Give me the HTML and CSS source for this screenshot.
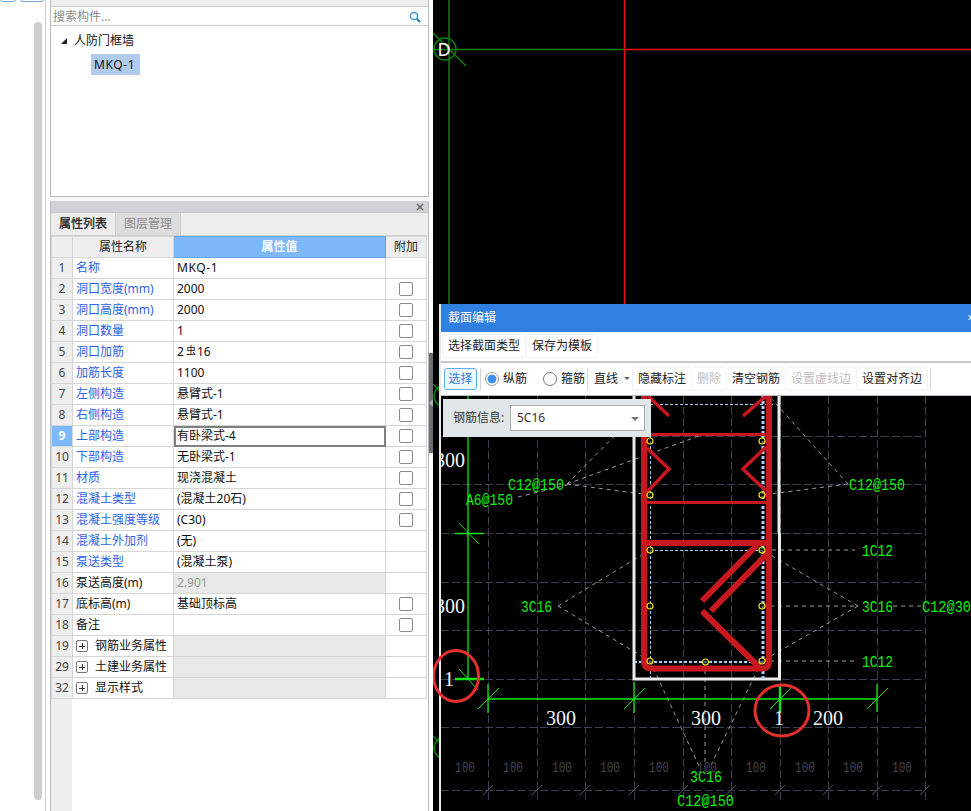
FILE: index.html
```html
<!DOCTYPE html>
<html lang="zh">
<head>
<meta charset="utf-8">
<title>截面编辑</title>
<link rel="stylesheet" href="styles.css">
</head>
<body>
<div class="app">
  <aside class="rail">
    <div class="rail-btns"><span class="rail-btn small"></span><span class="rail-btn wide"></span></div>
    <div class="rail-scroll"></div>
  </aside>
  <div class="side">
    <section class="tree-panel">
      <div class="tree-top"></div>
      <div class="search">
        <span class="search-text">搜索构件...</span>
        <svg class="search-icon" width="12" height="12" viewBox="0 0 12 12"><circle cx="5" cy="5" r="3.6" fill="none" stroke="#3d9bd8" stroke-width="1.5"/><path d="M7.8 7.8 11 11" stroke="#2f7fb8" stroke-width="2"/></svg>
      </div>
      <div class="tree">
        <div class="tree-root"><span class="tree-arrow"></span>人防门框墙</div>
        <div class="tree-leaf"><span class="tree-sel">MKQ-1</span></div>
      </div>
    </section>
    <div class="side-gap"></div>
    <section class="prop-panel">
      <div class="prop-head"><svg width="8" height="8" viewBox="0 0 8 8"><path d="M1 1 7 7M7 1 1 7" stroke="#666" stroke-width="1.5"/></svg></div>
      <div class="tabs"><span class="tab active">属性列表</span><span class="tab">图层管理</span></div>
      <div class="prop-body">
        <table class="props">
          <colgroup><col class="c-no"><col class="c-name"><col class="c-val"><col class="c-add"></colgroup>
          <thead><tr><th class="no"></th><th>属性名称</th><th class="hl">属性值</th><th>附加</th></tr></thead>
          <tbody>
            <tr><td class="no">1</td><td class="name link">名称</td><td class="val"><span class="code">MKQ-1</span></td><td></td></tr>
            <tr><td class="no">2</td><td class="name link">洞口宽度(mm)</td><td class="val">2000</td><td><span class="check"></span></td></tr>
            <tr><td class="no">3</td><td class="name link">洞口高度(mm)</td><td class="val">2000</td><td><span class="check"></span></td></tr>
            <tr><td class="no">4</td><td class="name link">洞口数量</td><td class="val">1</td><td><span class="check"></span></td></tr>
            <tr><td class="no">5</td><td class="name link">洞口加筋</td><td class="val">2<span class="rebar">虫</span>16</td><td><span class="check"></span></td></tr>
            <tr><td class="no">6</td><td class="name link">加筋长度</td><td class="val">1100</td><td><span class="check"></span></td></tr>
            <tr><td class="no">7</td><td class="name link">左侧构造</td><td class="val">悬臂式-1</td><td><span class="check"></span></td></tr>
            <tr><td class="no">8</td><td class="name link">右侧构造</td><td class="val">悬臂式-1</td><td><span class="check"></span></td></tr>
            <tr><td class="no cur">9</td><td class="name link">上部构造</td><td class="val edit">有卧梁式-4</td><td><span class="check"></span></td></tr>
            <tr><td class="no">10</td><td class="name link">下部构造</td><td class="val">无卧梁式-1</td><td><span class="check"></span></td></tr>
            <tr><td class="no">11</td><td class="name link">材质</td><td class="val">现浇混凝土</td><td><span class="check"></span></td></tr>
            <tr><td class="no">12</td><td class="name link">混凝土类型</td><td class="val">(混凝土20石)</td><td><span class="check"></span></td></tr>
            <tr><td class="no">13</td><td class="name link">混凝土强度等级</td><td class="val">(C30)</td><td><span class="check"></span></td></tr>
            <tr><td class="no">14</td><td class="name link">混凝土外加剂</td><td class="val">(无)</td><td></td></tr>
            <tr><td class="no">15</td><td class="name link">泵送类型</td><td class="val">(混凝土泵)</td><td></td></tr>
            <tr><td class="no">16</td><td class="name">泵送高度(m)</td><td class="val off">2.901</td><td></td></tr>
            <tr><td class="no">17</td><td class="name">底标高(m)</td><td class="val">基础顶标高</td><td><span class="check"></span></td></tr>
            <tr><td class="no">18</td><td class="name">备注</td><td class="val"></td><td><span class="check"></span></td></tr>
            <tr><td class="no">19</td><td class="name"><span class="plus"></span>钢筋业务属性</td><td class="val off"></td><td></td></tr>
            <tr><td class="no">29</td><td class="name"><span class="plus"></span>土建业务属性</td><td class="val off"></td><td></td></tr>
            <tr><td class="no">32</td><td class="name"><span class="plus"></span>显示样式</td><td class="val off"></td><td></td></tr>
          </tbody>
        </table>
      </div>
    </section>
  </div>
  <div class="splitter"><span class="handle"><i></i></span></div>
  <main class="canvas">
    <svg class="cad-back" width="538" height="811" viewBox="433 0 538 811">
      <g fill="none" stroke="#0b7f0b" stroke-width="1.5">
        <path d="M449 0V304M433 49.500H624"/>
        <circle cx="445" cy="49" r="11"/>
        <path d="M433 33 466 66"/>
        <circle cx="445" cy="396" r="11"/>
        <path d="M433 384 466 417"/>
        <circle cx="445" cy="748" r="11"/>
        <path d="M433 736 466 769"/>
      </g>
      <path d="M624.500 0V304M624 49.500H971" stroke="#f01010" stroke-width="1.500" fill="none"/>
      <text class="axis" x="444" y="56" text-anchor="middle">D</text>
    </svg>

    <div class="dialog">
      <div class="dlg-title"><span>截面编辑</span><span class="dlg-close">×</span></div>
      <div class="bar bar1">
        <span class="tbtn">选择截面类型</span><span class="tbtn">保存为模板</span>
      </div>
      <div class="bar bar2">
        <span class="tbtn on">选择</span>
        <i class="sep s1"></i>
        <span class="radio sel"></span><span class="rlabel">纵筋</span>
        <span class="radio r2"></span><span class="rlabel">箍筋</span>
        <i class="sep s2"></i>
        <span class="combo">直线</span><i class="tri"></i>
        <span class="tbtn first">隐藏标注</span><span class="tbtn dis">删除</span><span class="tbtn">清空钢筋</span><span class="tbtn dis">设置虚线边</span><span class="tbtn">设置对齐边</span>
        <i class="sep s3"></i>
      </div>
      <div class="stage">
        <svg class="cad" width="530" height="415" viewBox="441 396 530 415">
          <path class="grid" d="M488 396V800M537 396V800M585 396V800M634 396V800M683 396V800M731 396V800M780 396V800M828 396V800M877 396V800M925 396V800M441 436.500H925M441 484.500H925M441 533.500H925M441 582.500H925M441 630.500H925M441 679.500H925M441 727.500H925M441 790.500H925"/>
          <path class="tick" d="M483 795 493 785M532 795 542 785M580 795 590 785M629 795 639 785M678 795 688 785M726 795 736 785M775 795 785 785M823 795 833 785M872 795 882 785M920 795 930 785"/>

          <path class="leader" d="M518 497 567 485M567 484 650 400M567 484 707 433M567 484 650 495M848 484 769 396M848 484 762 495M558 606 650 550M558 606 650 661M858 606 762 550M858 606 762 661M762 606 858 606M893 606 922 606M772 550 855 550M762 661 855 661M650 661 700 768M762 661 710 767M705 662V767"/>

          <path class="white" d="M634 396V679H779.500V533M779 533V396"/>

          <path class="bar-blue b1" d="M650.500 396V680"/>
          <path class="bar-blue b2" d="M763 396V680"/>
          <path class="bar-blue b3" d="M650 404.500H775M650 550.500H763"/>
          <path class="bar-blue b4" d="M634 662H763"/>

          <g fill="none" stroke="#c8181f">
            <path stroke-width="6" d="M644 396V661Q644 668.500 651 668.500H762Q769 668.500 769 661V396"/>
            <path stroke-width="3" d="M647 434.500H766M647 502.500H766"/>
            <path stroke-width="6" d="M647 543H766"/>
            <path stroke-width="3.500" d="M648 396 669 416M766 396 743 416M647 448 669 469 647 492M766 447 743 469 766 491"/>
            <path stroke-width="6" d="M757 545 702 601M768 553 711 611M702 611 759 667"/>
          </g>

          <g class="nodes">
            <circle cx="650" cy="441" r="3"/><circle cx="762" cy="441" r="3"/>
            <circle cx="650" cy="495" r="3"/><circle cx="762" cy="495" r="3"/>
            <circle cx="650" cy="550" r="3"/><circle cx="762" cy="550" r="3"/>
            <circle cx="650" cy="606" r="3"/><circle cx="762" cy="606" r="3"/>
            <circle cx="650" cy="661" r="3"/><circle cx="705.500" cy="662" r="3"/><circle cx="762" cy="661" r="3"/>
          </g>

          <g class="dim-line">
            <path d="M468 396V679M455 533.500H484M488 699H877M488 684V713M634 682V713M877 684V712"/>
            <path class="thin" d="M459 523 479 544M478 709 499 688M624 709 645 688M770 709 791 688M867 709 888 688M459 669 478 690"/>
            <path class="thick" d="M455 679H484M780 686V713"/>
          </g>

          <g class="gtext">
            <text x="508" y="490" textLength="56" lengthAdjust="spacingAndGlyphs">C12@150</text>
            <text x="466" y="505" textLength="47" lengthAdjust="spacingAndGlyphs">A6@150</text>
            <text x="849" y="490" textLength="56" lengthAdjust="spacingAndGlyphs">C12@150</text>
            <text x="521" y="612" textLength="31" lengthAdjust="spacingAndGlyphs">3C16</text>
            <text x="862" y="612" textLength="31" lengthAdjust="spacingAndGlyphs">3C16</text>
            <text x="922" y="612" textLength="49" lengthAdjust="spacingAndGlyphs">C12@30</text>
            <text x="862" y="556" textLength="31" lengthAdjust="spacingAndGlyphs">1C12</text>
            <text x="862" y="667" textLength="31" lengthAdjust="spacingAndGlyphs">1C12</text>
            <text x="690" y="782" textLength="32" lengthAdjust="spacingAndGlyphs">3C16</text>
            <text x="677" y="806" textLength="57" lengthAdjust="spacingAndGlyphs">C12@150</text>
          </g>

          <g class="dtext">
            <text x="435" y="467">300</text>
            <text x="435" y="613">300</text>
            <text x="546" y="725">300</text>
            <text x="691" y="725">300</text>
            <text x="813" y="725">200</text>
            <text x="444" y="686">1</text>
            <text x="774" y="725">1</text>
          </g>

          <g class="ltext">
            <text x="455" y="772" textLength="20" lengthAdjust="spacingAndGlyphs">100</text>
            <text x="503" y="772" textLength="20" lengthAdjust="spacingAndGlyphs">100</text>
            <text x="552" y="772" textLength="20" lengthAdjust="spacingAndGlyphs">100</text>
            <text x="600" y="772" textLength="20" lengthAdjust="spacingAndGlyphs">100</text>
            <text x="649" y="772" textLength="20" lengthAdjust="spacingAndGlyphs">100</text>
            <text x="697" y="772" textLength="20" lengthAdjust="spacingAndGlyphs">100</text>
            <text x="746" y="772" textLength="20" lengthAdjust="spacingAndGlyphs">100</text>
            <text x="795" y="772" textLength="20" lengthAdjust="spacingAndGlyphs">100</text>
            <text x="843" y="772" textLength="20" lengthAdjust="spacingAndGlyphs">100</text>
            <text x="892" y="772" textLength="20" lengthAdjust="spacingAndGlyphs">100</text>
          </g>
        </svg>
        <div class="rebar-info">
          <span class="info-label">钢筋信息:</span>
          <span class="info-select">5C16<i class="tri dark"></i></span>
        </div>
      </div>
    </div>

    <svg class="marks" width="538" height="811" viewBox="433 0 538 811">
      <ellipse cx="456" cy="676" rx="22.500" ry="25.500"/>
      <ellipse cx="782" cy="710.500" rx="27" ry="25.500"/>
    </svg>
  </main>
</div>
</body>
</html>
```

FILE: styles.css
```css
* { box-sizing: border-box; }
html, body { margin: 0; padding: 0; height: 811px; overflow: hidden; background: #fff; }
body { font: 12px/1 "Noto Sans", "Noto Sans CJK SC", sans-serif; color: #111; }
i { display: block; font-style: normal; }

.app { display: flex; width: 971px; height: 811px; overflow: hidden; }

/* left rail */
.rail { width: 46px; flex: none; border-right: 1px solid #cfcfcf; background: #fff; }
.rail-btns { display: flex; gap: 4px; height: 3px; overflow: hidden; }
.rail-btn { display: block; height: 10px; margin-top: -8px; border: 1px solid #6aa9e6; border-radius: 3px; }
.rail-btn.small { width: 16px; }
.rail-btn.wide { width: 24px; }
.rail-scroll { width: 8px; height: 778px; margin: 19px 0 0 34px; background: #cdcdcd; border-radius: 4px; }

/* side column */
.side { width: 379px; margin-left: 4px; flex: none; display: flex; flex-direction: column; }
.tree-panel { height: 197px; border: 1px solid #b9b9be; border-top: 0; display: flex; flex-direction: column; }
.tree-top { height: 7px; flex: none; background: #eeeeee; border-bottom: 1px solid #c9c9d0; }
.search { height: 19px; flex: none; display: flex; align-items: center; justify-content: space-between; padding: 2px 7px 0 2px; border-bottom: 1px solid #c9c9d0; }
.search-text { color: #8a8a8a; }
.search-icon { display: block; }
.tree { flex: 1; padding-top: 8px; }
.tree-root { display: flex; align-items: center; height: 14px; padding-left: 10px; }
.tree-arrow { width: 0; height: 0; margin-right: 7px; border-left: 6px solid transparent; border-bottom: 6px solid #222; }
.tree-leaf { margin-top: 6px; padding-left: 40px; }
.tree-sel { display: inline-block; height: 21px; line-height: 21px; padding: 0 5px 0 3px; background: #b1cbec; letter-spacing: .6px; }
.side-gap { height: 4px; flex: none; background: #f7f7f7; }
.prop-panel { flex: 1; border: 1px solid #b9b9be; border-top: 0; border-bottom: 0; display: flex; flex-direction: column; min-height: 0; }
.prop-head { height: 12px; flex: none; background: #d2d3d7; display: flex; align-items: center; justify-content: flex-end; padding-right: 4px; border-bottom: 1px solid #c5c6cb; }
.prop-head svg { display: block; }
.tabs { height: 23px; flex: none; display: flex; background: #eeeeee; border-bottom: 1px solid #cfcfd4; }
.tab { width: 65px; line-height: 22px; text-align: center; background: #dddddd; color: #8a8a8a; border-right: 1px solid #c9c9ce; }
.tab.active { background: #eeeeee; color: #222; -webkit-text-stroke: .3px #222; }
.prop-body { flex: 1; background: linear-gradient(to right, #eeeeee 21px, #fff 21px); }
.props { border-collapse: collapse; table-layout: fixed; width: 375px; }
.c-no { width: 21px; }
.c-name { width: 101px; }
.c-val { width: 212px; }
.c-add { width: 41px; }
.props th, .props td { height: 21px; padding: 0; border: 1px solid #d6d6d6; font-weight: normal; white-space: nowrap; vertical-align: middle; }
.props thead th { background: #eeeeee; text-align: center; color: #222; }
.props thead th.hl { background: #7db8f8; color: #fff; border: 1px solid #64a6ee; -webkit-text-stroke: .3px #fff; }
.props td.no { background: #eeeeee; text-align: center; color: #444; }
.props td.no.cur { background: #7db8f8; color: #fff; font-weight: bold; }
.props td.name { padding-left: 3px; color: #111; }
.props td.name.link { color: #2e62e6; }
.props td.val { padding-left: 3px; color: #111; }
.props td.val.off { background: #e8e8e8; color: #999; }
.props td.val.edit { outline: 2px solid #808080; outline-offset: -2px; }
.props td:last-child { text-align: center; }
.code { letter-spacing: .6px; }
.check { display: block; width: 14px; height: 14px; margin: 0 auto; border: 1px solid #8c8c8c; border-radius: 2px; background: #fff; }
.rebar { font-size: 10px; margin: 0 1px 0 2px; position: relative; top: -2px; }
.plus { display: inline-block; width: 12px; height: 12px; margin-right: 7px; vertical-align: -2px; border: 1px solid #777; border-radius: 2px; background: linear-gradient(#333,#333) center/6px 1px no-repeat, linear-gradient(#333,#333) center/1px 6px no-repeat, #fff; }

/* splitter */
.splitter { width: 4px; flex: none; padding-top: 353px; background: #fff; }
.handle { display: flex; align-items: center; height: 100px; background: #6c7076; }
.handle i { width: 0; height: 0; border-top: 4px solid transparent; border-bottom: 4px solid transparent; border-right: 4px solid #aab0b6; }

/* canvas */
.canvas { flex: 1; position: relative; background: #000; overflow: hidden; }
.cad-back { position: absolute; left: 0; top: 0; display: block; }
.axis { font: 18px "Noto Sans", sans-serif; fill: #fff; }
.marks { position: absolute; left: 0; top: 0; display: block; pointer-events: none; }
.marks ellipse { fill: none; stroke: #e5302e; stroke-width: 3; }

/* dialog (a window on the canvas) */
.dialog { position: absolute; left: 6px; top: 304px; width: 532px; height: 507px; border-left: 2px solid #e8e8e8; display: flex; flex-direction: column; overflow: hidden; background: #000; }
.dlg-title { height: 28px; flex: none; margin-left: -2px; background: #2f80e0; color: #fff; display: flex; align-items: center; justify-content: space-between; padding: 0 0 0 9px; }
.dlg-close { font-size: 12px; margin-right: -3px; }
.bar { flex: none; display: flex; align-items: center; background: #fff; }
.bar1 { height: 31px; padding: 0 0 2px 2px; border-bottom: 2px solid #c6cacf; gap: 2px; }
.bar2 { height: 33px; padding: 0 0 1px 3px; border-bottom: 1px solid #b9bcc0; }
.tbtn { display: block; line-height: 22px; height: 22px; padding: 0 5px; background: #fff; border-radius: 3px; box-shadow: 0 0 0 1px #f4f4f4; color: #222; }
.bar2 .tbtn { margin-right: 1px; }
.tbtn.on { width: 33px; padding: 0; text-align: center; margin-right: 0; color: #2f80e0; background: #eef6ff; border: 1px solid #5fabf2; line-height: 20px; box-shadow: none; }
.tbtn.dis { color: #bdbdbd; }
.tbtn.first { margin-left: 3px; }
.sep { width: 1px; height: 22px; background: #d6d6d6; }
.s1 { margin: 0 4px 0 3px; }
.s2 { margin: 0 6px 0 2px; }
.s3 { margin-left: 2px; }
.radio { display: block; width: 14px; height: 14px; border: 1px solid #777; border-radius: 50%; background: #fff; }
.radio.sel { border-color: #9a9a9a; background: radial-gradient(circle, #3d8ff0 0, #3d8ff0 4px, #fff 4.800px); }
.radio.r2 { margin-left: 16px; }
.rlabel { margin-left: 4px; }
.combo { color: #222; }
.tri { width: 0; height: 0; margin-left: 6px; border-left: 3px solid transparent; border-right: 3px solid transparent; border-top: 3px solid #666; }

.stage { flex: 1; position: relative; min-height: 0; }
.cad { display: block; }
.grid { fill: none; stroke: #3a4252; stroke-width: 1; stroke-dasharray: 8 3; shape-rendering: crispEdges; }
.tick { fill: none; stroke: #4a5060; stroke-width: 1; }
.leader { fill: none; stroke: #9b9b9b; stroke-width: 1; stroke-dasharray: 4 4; }
.white { fill: none; stroke: #ececec; stroke-width: 3; }
.bar-blue { fill: none; stroke: #a9d2f5; stroke-dasharray: 3 2; }
.b1 { stroke-width: 1; }
.b2 { stroke-width: 3; }
.b3 { stroke-width: 1; }
.b4 { stroke-width: 2; }
.nodes circle { fill: #000; fill-opacity: .55; stroke: #f4e21c; stroke-width: 1.200; }
.dim-line { fill: none; stroke: #0fe90f; stroke-width: 1.300; }
.dim-line .thin { stroke-width: 1; }
.dim-line .thick { stroke-width: 2.400; }
.gtext text { font: 16px "Liberation Mono", monospace; fill: #11ee11; }
.dtext text { font: 20px "Liberation Serif", serif; fill: #f2f8ff; }
.ltext text { font: 14px "Liberation Mono", monospace; fill: #40444c; }

.rebar-info { position: absolute; left: 2px; top: 3px; width: 208px; height: 38px; background: #e1e7e9; display: flex; align-items: center; padding-left: 10px; }
.info-label { color: #333; width: 57px; flex: none; }
.info-select { position: relative; display: block; width: 135px; height: 26px; line-height: 24px; padding-left: 6px; background: #fff; border: 1px solid #a9a9a9; color: #333; }
.tri.dark { position: absolute; right: 5px; top: 11px; margin: 0; border-left-width: 4px; border-right-width: 4px; border-top-width: 4px; border-top-color: #777; }
```
